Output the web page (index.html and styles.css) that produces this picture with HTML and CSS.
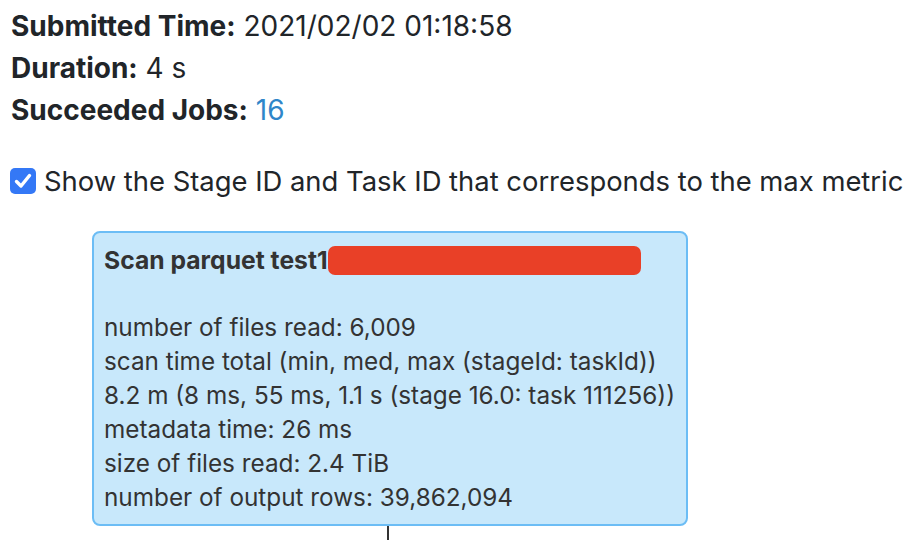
FILE: index.html
```html
<!DOCTYPE html>
<html>
<head>
<meta charset="utf-8">
<link rel="stylesheet" href="styles.css">
</head>
<body>
<div class="page">
  <ul class="summary">
    <li><strong>Submitted Time:</strong> 2021/02/02 01:18:58</li>
    <li><strong>Duration:</strong> 4 s</li>
    <li><strong>Succeeded Jobs:</strong> <a class="link" href="#">16</a></li>
  </ul>
  <label class="toggle">
    <span class="checkbox"><svg viewBox="0 0 26 26" width="26" height="26"><path d="M6.5 13.5 L11 18 L19.5 7.5" fill="none" stroke="#fff" stroke-width="3.4" stroke-linecap="round" stroke-linejoin="round"/></svg></span>
    <span class="toggle-text">Show the Stage ID and Task ID that corresponds to the max metric</span>
  </label>
  <div class="graph">
    <div class="node">
      <div class="node-title">Scan parquet test1<span class="redact"></span></div>
      <div class="node-body">
        <div>number of files read: 6,009</div>
        <div>scan time total (min, med, max (stageId: taskId))</div>
        <div>8.2 m (8 ms, 55 ms, 1.1 s (stage 16.0: task 111256))</div>
        <div>metadata time: 26 ms</div>
        <div>size of files read: 2.4 TiB</div>
        <div>number of output rows: 39,862,094</div>
      </div>
    </div>
    <div class="edge"></div>
  </div>
</div>
</body>
</html>
```
FILE: styles.css
```css
html, body {
  margin: 0;
  padding: 0;
  background: #fff;
}
.page {
  font-family: Inter, "Liberation Sans", sans-serif;
  color: #212529;
  padding: 5px 0 0 11px;
}
.summary {
  list-style: none;
  margin: 0;
  padding: 0;
  font-size: 28px;
  line-height: 42px;
}
.summary strong {
  font-weight: 700;
}
.link {
  color: #2f86c9;
  text-decoration: none;
}
.toggle {
  display: flex;
  align-items: center;
  gap: 8px;
  margin-top: 34px;
  font-size: 27.4px;
  line-height: 32px;
  margin-left: -1px;
}
.checkbox {
  width: 26px;
  height: 26px;
  border-radius: 5px;
  background: #3478f6;
  display: flex;
  flex: none;
}
.graph {
  display: flex;
  flex-direction: column;
  align-items: flex-start;
  margin-top: 34px;
  margin-left: 81px;
}
.node {
  width: 572px;
  background: #c8e8fb;
  border: 2px solid #6cbdf5;
  border-radius: 8px;
  padding: 10px 10px 10px 10px;
  color: #333;
  font-size: 24.3px;
}
.node-title {
  font-weight: 700;
  font-size: 24.7px;
  display: flex;
  align-items: center;
  line-height: 34px;
  height: 34px;
}
.redact {
  display: inline-block;
  width: 313px;
  height: 29px;
  background: #e94027;
  border-radius: 7px;
}
.node-body {
  margin-top: 33px;
  line-height: 34px;
}
.edge {
  width: 2px;
  height: 20px;
  background: #333;
  margin-left: 295px;
}
```
